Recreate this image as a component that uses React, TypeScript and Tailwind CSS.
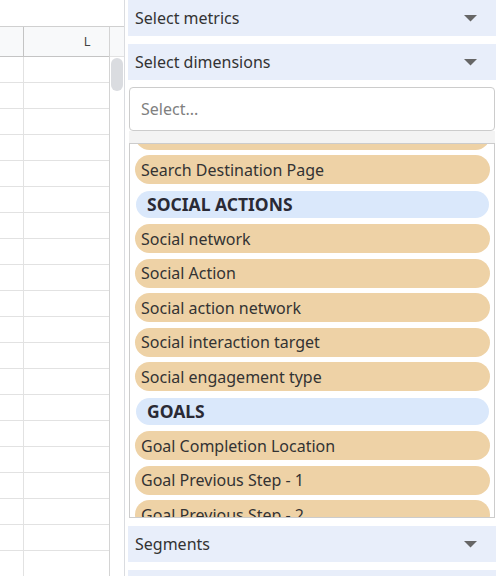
import React from "react";

type Row = { label: string; header?: boolean };

const rows: Row[] = [
  { label: "Search Destination" },
  { label: "Search Destination Page" },
  { label: "SOCIAL ACTIONS", header: true },
  { label: "Social network" },
  { label: "Social Action" },
  { label: "Social action network" },
  { label: "Social interaction target" },
  { label: "Social engagement type" },
  { label: "GOALS", header: true },
  { label: "Goal Completion Location" },
  { label: "Goal Previous Step - 1" },
  { label: "Goal Previous Step - 2" },
  { label: "Goal Previous Step - 3" },
];

function Caret() {
  return (
    <svg width="13" height="7" viewBox="0 0 13 7" className="shrink-0">
      <path d="M0 0 H13 L6.5 6.5 Z" fill="#666" />
    </svg>
  );
}

function Bar({ label }: { label: string }) {
  return (
    <div className="h-[36px] shrink-0 bg-[#e8eefa] flex items-center justify-between pl-[7px] pr-[19px] text-[16px] text-[#333]">
      <span>{label}</span>
      <Caret />
    </div>
  );
}

function Sheet() {
  const lines = Array.from({ length: 20 });
  return (
    <div className="w-[125px] shrink-0 border-r border-[#dadce0] flex flex-col h-full overflow-hidden">
      <div className="h-[27px] border-b border-[#d0d0d0] shrink-0" />
      <div className="flex flex-1 min-h-0">
        <div className="w-[110px] flex flex-col border-r border-[#d4d4d4]">
          <div className="h-[30px] shrink-0 flex bg-[#f8f9fa] border-b border-[#c4c4c4]">
            <div className="w-[24px] border-r border-[#c4c4c4]" />
            <div className="flex-1 pl-[60px] flex items-center text-[12px] text-[#444] font-['Roboto',sans-serif]">L</div>
          </div>
          {lines.map((_, i) => (
            <div key={i} className="h-[26px] shrink-0 flex border-b border-[#e2e2e2]">
              <div className="w-[24px] border-r border-[#e2e2e2]" />
              <div className="flex-1" />
            </div>
          ))}
        </div>
        <div className="flex-1 flex flex-col">
          <div className="h-[30px] bg-[#f8f9fa] border-b border-[#e2e2e2] shrink-0" />
          <div className="mt-[1px] mx-[1px] h-[33px] shrink-0 rounded-full bg-[#dadce0]" />
        </div>
      </div>
    </div>
  );
}

export default function App() {
  return (
    <div className="w-[499px] h-[576px] overflow-hidden bg-white flex font-['Noto_Sans',sans-serif]">
      <Sheet />
      <div className="flex-1 min-w-0 h-full overflow-hidden pl-[3px] pr-[3px] flex flex-col">
        <Bar label="Select metrics" />
        <div className="h-[8px] shrink-0" />
        <Bar label="Select dimensions" />
        <div className="h-[7px] shrink-0" />
        <div className="mx-[1px] h-[44px] shrink-0 border border-[#cccccc] rounded-[4px] flex items-center pl-[11px] text-[16px] text-[#808080]">
          Select...
        </div>
        <div className="mx-[1px] h-[12px] shrink-0 bg-[#f3f3f3]" />
        <div className="mx-[1px] h-[375px] shrink-0 border border-[#cccccc] overflow-hidden">
          <div className="mt-[-26px] flex flex-col">
            {rows.map((r, i) => (
              <div key={i} className="h-[34.5px] shrink-0 flex items-center">
                {r.header ? (
                  <div className="ml-[6px] mr-[5px] flex-1 h-[27px] rounded-full bg-[#dae8fb] flex items-center pl-[11px] text-[17.5px] font-bold text-[#2a2a35]">
                    {r.label}
                  </div>
                ) : (
                  <div className="ml-[5px] mr-[4px] flex-1 h-[29px] rounded-full bg-[#eed2a6] flex items-center pl-[6px] text-[16px] text-[#333]">
                    {r.label}
                  </div>
                )}
              </div>
            ))}
          </div>
        </div>
        <div className="h-[8px] shrink-0" />
        <Bar label="Segments" />
        <div className="h-[8px] shrink-0" />
        <div className="h-[36px] shrink-0 bg-[#e8eefa]" />
      </div>
    </div>
  );
}
